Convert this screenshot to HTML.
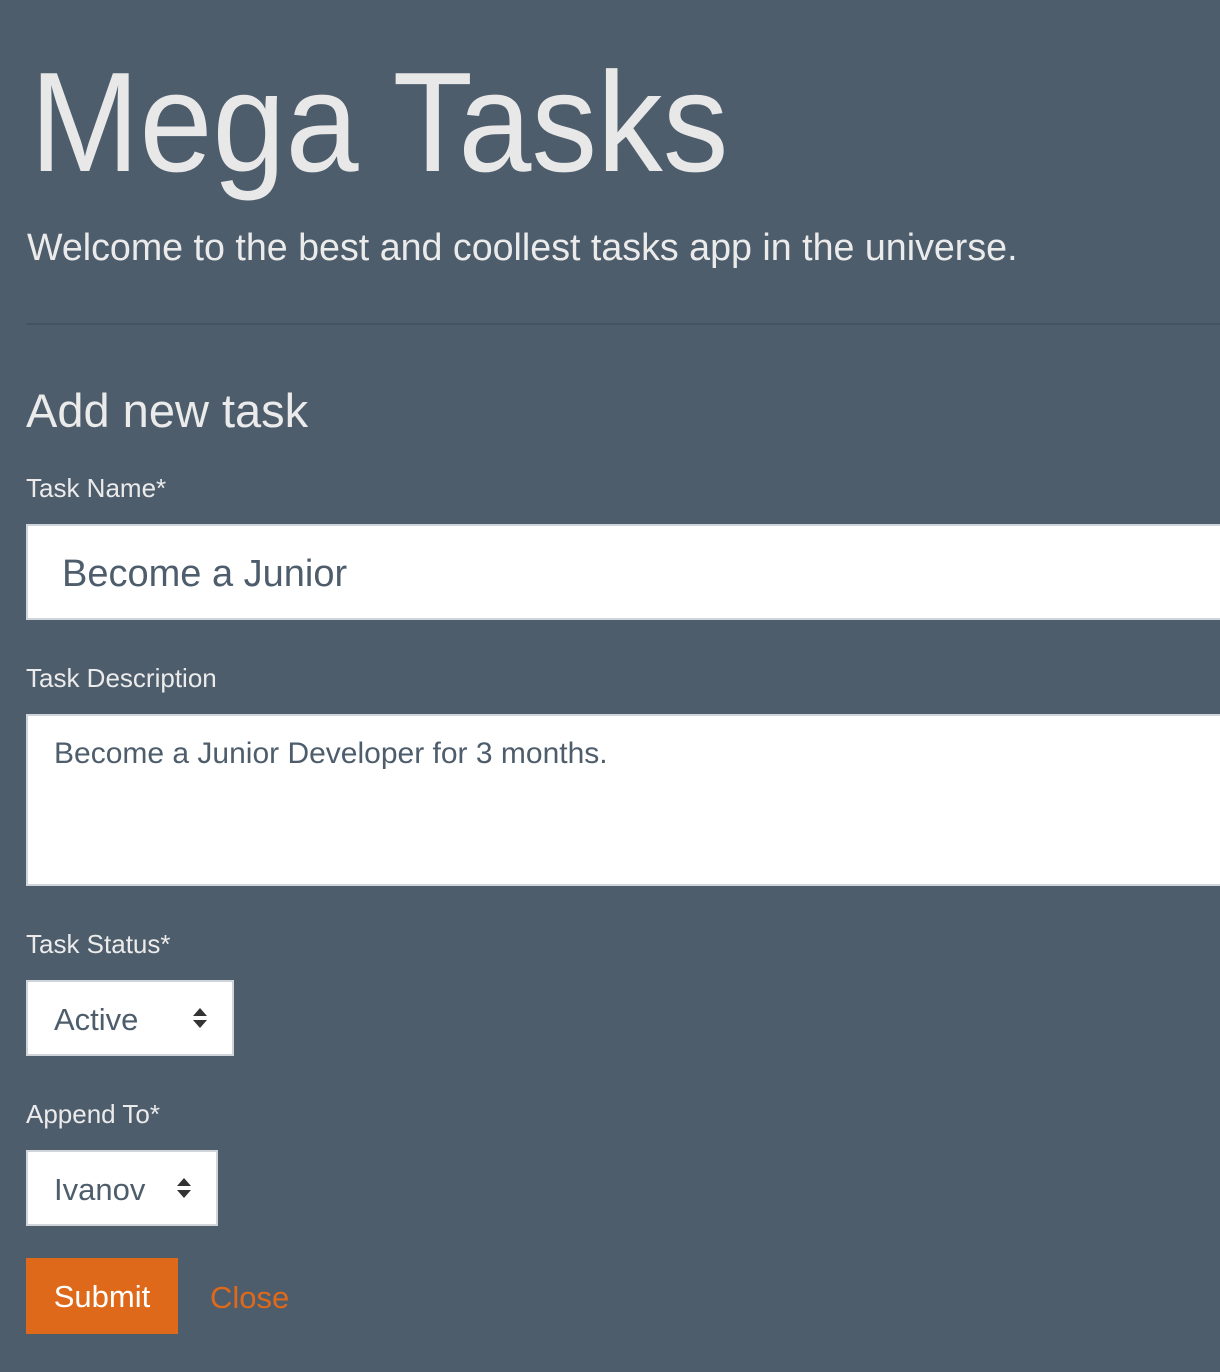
<!DOCTYPE html>
<html><head><style>
body{margin:0;width:1220px;height:1372px;background:#4e5d6c;font-family:"Liberation Sans",sans-serif;color:#ebebeb;overflow:hidden;position:relative}
.a{position:absolute;white-space:nowrap}
.box{position:absolute;background:#fff;border:2px solid #cfd4da;box-sizing:border-box;color:#4e5d6c}
.arr{position:absolute;width:0;height:0;border-left:7px solid transparent;border-right:7px solid transparent}
</style></head><body>
<div class="a" style="left:30px;top:38px;font-size:142px;font-weight:300;transform:scaleX(0.925);transform-origin:left top;line-height:170px;color:#e8e8e8">Mega Tasks</div>
<div class="a" style="left:27px;top:224px;font-size:38px;line-height:48px;transform:scaleX(0.99);transform-origin:left top">Welcome to the best and coollest tasks app in the universe.</div>
<div class="a" style="left:26px;top:323px;width:1194px;height:2px;background:#45525f"></div>
<div class="a" style="left:26px;top:383px;font-size:47px;line-height:56px">Add new task</div>
<div class="a" style="left:26px;top:472px;font-size:26px;line-height:32px">Task Name*</div>
<div class="box" style="left:26px;top:524px;width:1210px;height:96px;font-size:38px;line-height:96px;padding-left:34px">Become a Junior</div>
<div class="a" style="left:26px;top:662px;font-size:26px;line-height:32px">Task Description</div>
<div class="box" style="left:26px;top:714px;width:1210px;height:172px;font-size:30px;line-height:36px;padding:20px 0 0 26px">Become a Junior Developer for 3 months.</div>
<div class="a" style="left:26px;top:928px;font-size:26px;line-height:32px">Task Status*</div>
<div class="box" style="left:26px;top:980px;width:208px;height:76px;font-size:31px;line-height:76px;padding-left:26px">Active
<div class="arr" style="left:165px;top:26px;border-bottom:8px solid #333"></div>
<div class="arr" style="left:165px;top:38px;border-top:8px solid #333"></div></div>
<div class="a" style="left:26px;top:1098px;font-size:26px;line-height:32px">Append To*</div>
<div class="box" style="left:26px;top:1150px;width:192px;height:76px;font-size:31px;line-height:76px;padding-left:26px">Ivanov
<div class="arr" style="left:149px;top:26px;border-bottom:8px solid #333"></div>
<div class="arr" style="left:149px;top:38px;border-top:8px solid #333"></div></div>
<div class="a" style="left:26px;top:1258px;width:152px;height:76px;background:#df691a;color:#fff;font-size:31px;line-height:78px;text-align:center">Submit</div>
<div class="a" style="left:210px;top:1258px;font-size:31px;line-height:80px;color:#df691a">Close</div>
</body></html>
